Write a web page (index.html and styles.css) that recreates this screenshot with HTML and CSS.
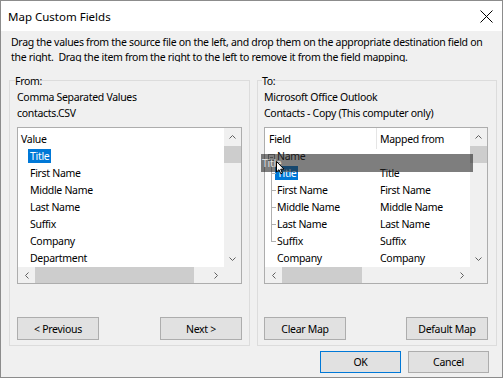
FILE: index.html
```html
<!DOCTYPE html>
<html lang="en">
<head>
  <meta charset="UTF-8" />
  <title>Map Custom Fields</title>
  <link rel="stylesheet" href="styles.css">
</head>
<body>
  <div class="window">
    <div class="titlebar">
      <span class="title">Map Custom Fields</span>
      <svg class="close" width="13" height="13" viewBox="0 0 13 13">
        <path d="M0.5 0.5 L12.5 12.5 M12.5 0.5 L0.5 12.5" stroke="#000" stroke-width="1" fill="none" />
      </svg>
    </div>

    <p class="desc">Drag the values from the source file on the left, and drop them on the appropriate destination field on the right.&nbsp; Drag the item from the right to the left to remove it from the field mapping.</p>

    <div class="groups">
      <div class="group group-from">
        <div class="legend">From:</div>
        <div class="source">Comma Separated Values<br>contacts.CSV</div>
        <div class="listbox">
          <div class="items">
            <div class="head">Value</div>
            <div class="row"><span class="sel">Title</span></div>
            <div class="row"><span>First Name</span></div>
            <div class="row"><span>Middle Name</span></div>
            <div class="row"><span>Last Name</span></div>
            <div class="row"><span>Suffix</span></div>
            <div class="row"><span>Company</span></div>
            <div class="row"><span>Department</span></div>
          </div>
          <div class="vscroll">
            <div class="arrow"><svg width="7" height="4" viewBox="0 0 7 4"><polyline points="0.5,3.5 3.5,0.5 6.5,3.5" /></svg></div>
            <div class="thumb"></div>
            <div class="track"></div>
            <div class="arrow"><svg width="7" height="4" viewBox="0 0 7 4"><polyline points="0.5,0.5 3.5,3.5 6.5,0.5" /></svg></div>
          </div>
          <div class="hscroll">
            <div class="arrow"><svg width="4" height="7" viewBox="0 0 4 7"><polyline points="3.5,0.5 0.5,3.5 3.5,6.5" /></svg></div>
            <div class="thumb thumb-from"></div>
            <div class="track"></div>
            <div class="arrow"><svg width="4" height="7" viewBox="0 0 4 7"><polyline points="0.5,0.5 3.5,3.5 0.5,6.5" /></svg></div>
          </div>
          <div class="corner"></div>
        </div>
        <div class="group-buttons">
          <button class="btn">&lt; Previous</button>
          <button class="btn">Next &gt;</button>
        </div>
      </div>

      <div class="group group-to">
        <div class="legend">To:</div>
        <div class="source">Microsoft Office Outlook<br>Contacts - Copy (This computer only)</div>
        <div class="listbox listbox-to">
          <div class="items">
            <div class="head map-head"><span class="col-field">Field</span><span class="col-map">Mapped from</span></div>
            <div class="map-row"><span class="tree parent"><span>Name</span></span><span class="col-map"></span></div>
            <div class="map-row"><span class="tree child"><span class="sel">Title</span></span><span class="col-map">Title</span></div>
            <div class="map-row"><span class="tree child"><span>First Name</span></span><span class="col-map">First Name</span></div>
            <div class="map-row"><span class="tree child"><span>Middle Name</span></span><span class="col-map">Middle Name</span></div>
            <div class="map-row"><span class="tree child"><span>Last Name</span></span><span class="col-map">Last Name</span></div>
            <div class="map-row"><span class="tree child last"><span>Suffix</span></span><span class="col-map">Suffix</span></div>
            <div class="map-row"><span class="tree"><span>Company</span></span><span class="col-map">Company</span></div>
          </div>
          <div class="vscroll">
            <div class="arrow"><svg width="7" height="4" viewBox="0 0 7 4"><polyline points="0.5,3.5 3.5,0.5 6.5,3.5" /></svg></div>
            <div class="thumb"></div>
            <div class="track"></div>
            <div class="arrow"><svg width="7" height="4" viewBox="0 0 7 4"><polyline points="0.5,0.5 3.5,3.5 6.5,0.5" /></svg></div>
          </div>
          <div class="hscroll">
            <div class="arrow"><svg width="4" height="7" viewBox="0 0 4 7"><polyline points="3.5,0.5 0.5,3.5 3.5,6.5" /></svg></div>
            <div class="thumb thumb-to"></div>
            <div class="track"></div>
            <div class="arrow"><svg width="4" height="7" viewBox="0 0 4 7"><polyline points="0.5,0.5 3.5,3.5 0.5,6.5" /></svg></div>
          </div>
          <div class="corner"></div>

          <!-- item being dragged -->
          <div class="drag-ghost">Title</div>
          <svg class="cursor" width="9" height="14" viewBox="0 0 9 14">
            <path d="M0.5 0.5 L0.5 11 L3 8.7 L4.8 12.8 L6.4 12.1 L4.7 8.2 L8 8.2 Z" fill="#fff" stroke="#000" stroke-width="1" />
          </svg>
        </div>
        <div class="group-buttons">
          <button class="btn">Clear Map</button>
          <button class="btn">Default Map</button>
        </div>
      </div>
    </div>

    <div class="dialog-buttons">
      <button class="btn btn-default">OK</button>
      <button class="btn">Cancel</button>
    </div>
  </div>
</body>
</html>
```

FILE: styles.css
```css
* {
  box-sizing: border-box;
}

body {
  margin: 0;
  font-family: "Noto Sans", sans-serif;
  font-size: 10.5px;
  letter-spacing: -0.3px;
  color: #000;
}

.window {
  width: 503px;
  height: 378px;
  border: 1px solid #8c8c8c;
  background: #f0f0f0;
  display: flex;
  flex-direction: column;
  overflow: hidden;
}

.titlebar {
  flex: none;
  height: 30px;
  background: #fff;
  display: flex;
  align-items: center;
  justify-content: space-between;
  padding: 0 9px 0 7px;
}

.title {
  font-size: 11.5px;
  letter-spacing: 0;
}

.close {
  display: block;
}

.desc {
  flex: none;
  margin: 0;
  padding: 4px 10px 0;
  height: 31px;
  line-height: 15px;
  overflow: hidden;
}

.groups {
  display: flex;
  gap: 7px;
  margin: 18px 0 0 8px;
}

.group {
  border: 1px solid #dcdcdc;
  padding: 0 7px 5px;
  width: 241px;
}

.group-to {
  width: 240px;
  padding-left: 6px;
}

.legend {
  width: fit-content;
  margin: -7px 0 0 -2px;
  line-height: 15px;
  background: #f0f0f0;
}

.source {
  line-height: 16px;
}

.listbox {
  position: relative;
  margin-top: 6px;
  width: 225px;
  height: 157px;
  border: 1px solid #adadad;
  background: #fff;
  display: grid;
  grid-template-columns: 1fr 17px;
  grid-template-rows: 1fr 16px;
}

.listbox-to {
  width: 224px;
}

.items {
  overflow: hidden;
}

.head {
  height: 20px;
  line-height: 18px;
  padding: 2px 0 0 3px;
}

.row {
  height: 17px;
  line-height: 17px;
  padding-left: 10px;
  white-space: nowrap;
}

.row span,
.tree span {
  padding: 0 2px;
}

.sel {
  background: #0078d7;
  color: #fff;
}

.map-head {
  display: grid;
  grid-template-columns: 112px 1fr;
  padding: 0;
  line-height: 20px;
}

.map-head span {
  padding-top: 1px;
}

.map-head .col-field {
  padding-left: 4px;
  border-right: 1px solid #e5e5e5;
}

.map-row {
  display: grid;
  grid-template-columns: 112px 1fr;
  height: 17px;
  line-height: 17px;
  white-space: nowrap;
}

.col-map {
  padding-left: 3px;
}

.tree {
  position: relative;
  padding-left: 10px;
}

.tree.parent::before {
  content: "";
  position: absolute;
  left: 3px;
  top: 6px;
  width: 5px;
  height: 5px;
  border: 1px solid #8a8a8a;
  background: linear-gradient(#8a8a8a, #8a8a8a) center / 3px 1px no-repeat;
}

.tree.child::before {
  content: "";
  position: absolute;
  left: 6px;
  top: 0;
  bottom: 0;
  border-left: 1px solid #b0b0b0;
}

.tree.child.last::before {
  bottom: 8px;
}

.tree.child::after {
  content: "";
  position: absolute;
  left: 6px;
  top: 8px;
  width: 5px;
  border-top: 1px solid #b0b0b0;
}

.vscroll {
  background: #f0f0f0;
  display: flex;
  flex-direction: column;
}

.vscroll .arrow {
  height: 17px;
}

.vscroll .thumb {
  height: 17px;
  margin-top: 1px;
}

.hscroll {
  background: #f0f0f0;
  display: flex;
}

.hscroll .arrow {
  width: 17px;
}

.track {
  flex: 1;
}

.arrow {
  display: flex;
  align-items: center;
  justify-content: center;
}

.arrow svg {
  display: block;
}

.arrow polyline {
  fill: none;
  stroke: #606060;
  stroke-width: 1;
}

.thumb {
  background: #cdcdcd;
}

.thumb-from {
  width: 159px;
}

.thumb-to {
  width: 80px;
}

.corner {
  background: #f0f0f0;
}

.drag-ghost {
  position: absolute;
  left: -4px;
  top: 26px;
  width: 212px;
  height: 18px;
  line-height: 18px;
  padding-left: 1px;
  background: rgba(40, 40, 40, 0.6);
  color: #dcdcdc;
}

.cursor {
  position: absolute;
  left: 11px;
  top: 33px;
}

.group-buttons {
  display: flex;
  justify-content: space-between;
  margin-top: 33px;
}

.group-to .group-buttons {
  width: 224px;
}

.btn {
  width: 82px;
  height: 23px;
  padding: 0;
  border: 1px solid #adadad;
  background: #e1e1e1;
  font-family: "Noto Sans", sans-serif;
  font-size: 10.5px;
  letter-spacing: -0.3px;
  color: #000;
}

.dialog-buttons {
  display: flex;
  justify-content: flex-end;
  gap: 7px;
  margin-top: 5px;
  padding-right: 13px;
}

.dialog-buttons .btn {
  width: 81px;
  height: 22px;
}

.btn-default {
  border-color: #0078d7;
}
```
